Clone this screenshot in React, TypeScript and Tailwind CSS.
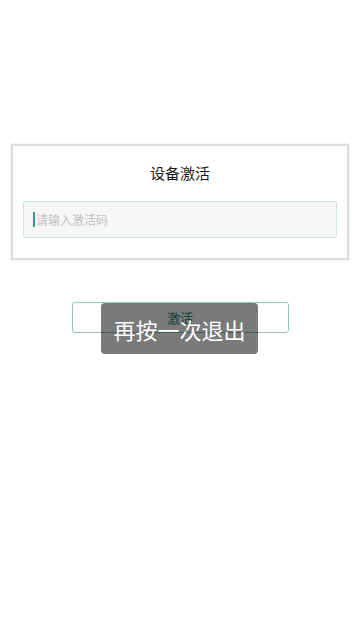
import { useState } from "react";

const font = { fontFamily: '"Noto Sans CJK SC", "Noto Sans", sans-serif' };

export default function App() {
  const [code, setCode] = useState("");

  return (
    <div className="relative h-[640px] w-[360px] bg-white" style={font}>
      <div className="pt-[144px]">
        <div className="mx-[11px] border-2 border-[#dedede] bg-white pb-[20px] pt-[17px] shadow-[0_0_2px_rgba(0,0,0,0.15)]">
          <h1 className="text-center text-[15px] leading-[20px] font-normal text-[#1a1a1a]">设备激活</h1>
          <div className="relative mx-[10px] mt-[18px]">
            <input
              value={code}
              onChange={(e) => setCode(e.target.value)}
              placeholder="请输入激活码"
              className="h-[37px] w-full rounded-[2px] border border-[#cfe8dc] bg-[#f6f6f6] pl-[12px] pr-[10px] text-[12px] text-[#333] caret-[#3a9c88] outline-none placeholder:text-[#c2c2c2]"
            />
            {/* caret */}
            {code === "" && (
              <span className="pointer-events-none absolute left-[10px] top-[11px] h-[15px] w-[2px] bg-[#3a9c88]" />
            )}
          </div>
        </div>

        <button className="mx-auto mt-[42px] block h-[31px] w-[217px] rounded-[3px] border border-[#8fc9bb] bg-white text-[13px] text-[#2a8a74]">
          激活
        </button>
      </div>

      {/* toast */}
      <div className="absolute left-[101px] top-[303px] flex h-[51px] w-[157px] items-center justify-center rounded-[4px] bg-[rgba(0,0,0,0.52)]">
        <span className="text-[22px] leading-none text-white">再按一次退出</span>
      </div>
    </div>
  );
}
